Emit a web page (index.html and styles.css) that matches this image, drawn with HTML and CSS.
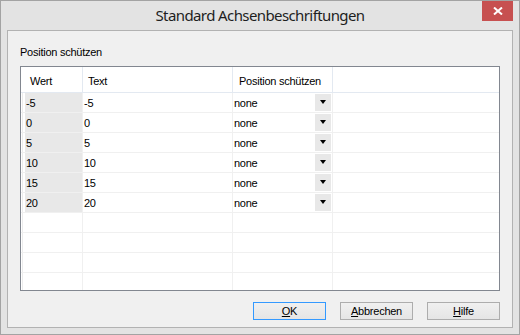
FILE: index.html
```html
<!DOCTYPE html>
<html lang="de">
  <head>
    <meta charset="UTF-8" />
    <meta name="viewport" content="width=device-width, initial-scale=1.0" />
    <title>Standard Achsenbeschriftungen</title>
    <link rel="stylesheet" href="styles.css">
  </head>
  <body>
    <div class="window">
      <div class="titlebar">
        <span></span>
        <span class="title">Standard Achsenbeschriftungen</span>
        <button class="close" type="button" aria-label="Schließen">
          <svg width="10" height="8" viewBox="0 0 10 8">
            <path d="M1 0.5 L9 7.5 M9 0.5 L1 7.5" stroke="#fff" stroke-width="2" />
          </svg>
        </button>
      </div>
      <div class="frame">
        <div class="panel">
          <div class="group-label">Position schützen</div>
          <div class="grid">
            <div class="row head">
              <div class="rh"></div>
              <div class="cell">Wert</div>
              <div class="cell">Text</div>
              <div class="cell">Position schützen</div>
              <div class="cell"></div>
            </div>
            <div class="row">
              <div class="rh"></div>
              <div class="cell key">-5</div>
              <div class="cell">-5</div>
              <div class="cell combo">none<span class="drop"></span></div>
              <div class="cell"></div>
            </div>
            <div class="row">
              <div class="rh"></div>
              <div class="cell key">0</div>
              <div class="cell">0</div>
              <div class="cell combo">none<span class="drop"></span></div>
              <div class="cell"></div>
            </div>
            <div class="row">
              <div class="rh"></div>
              <div class="cell key">5</div>
              <div class="cell">5</div>
              <div class="cell combo">none<span class="drop"></span></div>
              <div class="cell"></div>
            </div>
            <div class="row">
              <div class="rh"></div>
              <div class="cell key">10</div>
              <div class="cell">10</div>
              <div class="cell combo">none<span class="drop"></span></div>
              <div class="cell"></div>
            </div>
            <div class="row">
              <div class="rh"></div>
              <div class="cell key">15</div>
              <div class="cell">15</div>
              <div class="cell combo">none<span class="drop"></span></div>
              <div class="cell"></div>
            </div>
            <div class="row">
              <div class="rh"></div>
              <div class="cell key">20</div>
              <div class="cell">20</div>
              <div class="cell combo">none<span class="drop"></span></div>
              <div class="cell"></div>
            </div>
            <div class="row empty">
              <div class="rh"></div><div class="cell"></div><div class="cell"></div><div class="cell"></div><div class="cell"></div>
            </div>
            <div class="row empty">
              <div class="rh"></div><div class="cell"></div><div class="cell"></div><div class="cell"></div><div class="cell"></div>
            </div>
            <div class="row empty">
              <div class="rh"></div><div class="cell"></div><div class="cell"></div><div class="cell"></div><div class="cell"></div>
            </div>
            <div class="row empty">
              <div class="rh"></div><div class="cell"></div><div class="cell"></div><div class="cell"></div><div class="cell"></div>
            </div>
          </div>
          <div class="buttons">
            <button type="button" class="btn default"><u>O</u>K</button>
            <button type="button" class="btn"><u>A</u>bbrechen</button>
            <button type="button" class="btn"><u>H</u>ilfe</button>
          </div>
        </div>
      </div>
    </div>
  </body>
</html>
```

FILE: styles.css
```css
* {
  box-sizing: border-box;
}
body {
  margin: 0;
  font-family: "Liberation Sans", Arial, sans-serif;
  font-size: 11px;
  letter-spacing: -0.25px;
  color: #000;
}
.window {
  width: 520px;
  height: 335px;
  border: 1px solid #a3a3a3;
  background: #e3e3e3;
  display: flex;
  flex-direction: column;
}
.titlebar {
  height: 29px;
  display: grid;
  grid-template-columns: 1fr auto 1fr;
  padding: 0 6px;
}
.title {
  font-family: "Noto Sans", sans-serif;
  font-size: 15px;
  line-height: 20px;
  letter-spacing: -0.6px;
  color: #1e1e1e;
  padding-top: 4px;
  white-space: nowrap;
}
.close {
  justify-self: end;
  align-self: start;
  width: 31px;
  height: 20px;
  border: 0;
  padding: 0;
  background: #c75050;
  display: flex;
  align-items: center;
  justify-content: center;
}
.frame {
  flex: 1;
  padding: 0 6px 6px;
  display: flex;
}
.panel {
  flex: 1;
  border: 1px solid #b2b2b2;
  background: #f0f0f0;
  padding: 15px 12px 7px;
  display: flex;
  flex-direction: column;
}
.group-label {
  line-height: 13px;
}
.grid {
  margin-top: 7px;
  height: 225px;
  border: 1px solid #828790;
  background: #fff;
  overflow: hidden;
}
.row {
  display: grid;
  grid-template-columns: 4px 58px 150px 100px 1fr;
  height: 20px;
  border-bottom: 1px solid #f0f0f0;
}
.row.head {
  height: 26px;
  border-bottom-color: #e3e9f1;
}
.cell {
  border-right: 1px solid #f0f0f0;
  padding-left: 1px;
  display: flex;
  align-items: center;
  white-space: nowrap;
}
.cell:last-child {
  border-right: 0;
}
.head .cell {
  border-right-color: #e3e9f1;
  padding-left: 5px;
  padding-top: 2px;
}
.head .cell:nth-child(4) {
  padding-left: 6px;
}
.rh {
  border-left: 1px solid #fff;
  border-right: 2px solid #fff;
  background: #ececec;
}
.head .rh {
  background: #fff;
}
.key {
  background: #e8e8e8;
}
.combo {
  justify-content: space-between;
  padding-right: 1px;
}
.drop {
  width: 16px;
  height: 17px;
  background: #e8e8e8;
  display: flex;
  align-items: center;
  justify-content: center;
}
.drop::after {
  content: "";
  border-top: 4px solid #000;
  border-left: 3.5px solid transparent;
  border-right: 3.5px solid transparent;
  margin-bottom: 1px;
}
.buttons {
  margin-top: 11px;
  display: flex;
  justify-content: flex-end;
  gap: 14px;
}
.btn {
  width: 73px;
  height: 18px;
  border: 1px solid #adadad;
  background: linear-gradient(#f0f0f0, #e5e5e5);
  font-family: "Liberation Sans", Arial, sans-serif;
  font-size: 11px;
  letter-spacing: -0.25px;
  color: #000;
  padding: 0;
}
.btn.default {
  border-color: #3399ff;
}
```
